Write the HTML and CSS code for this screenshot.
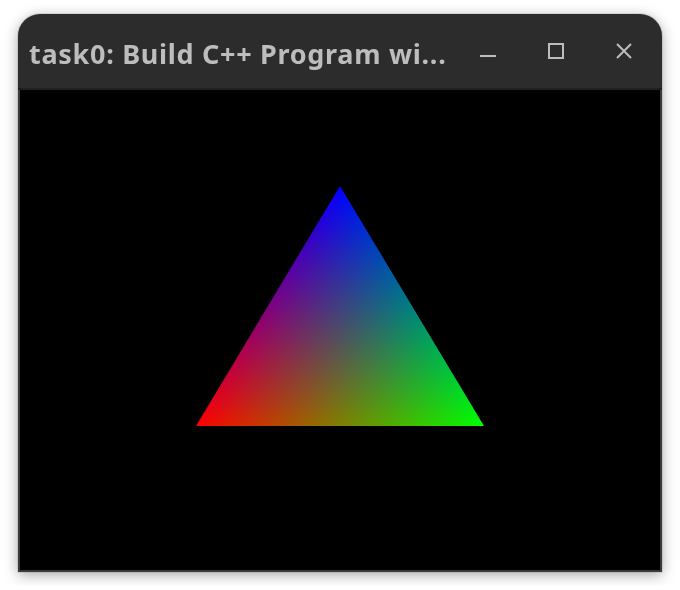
FILE: index.html
```html
<!DOCTYPE html>
<html>
<head>
<meta charset="utf-8">
<link rel="stylesheet" href="styles.css">
</head>
<body>
<div class="window">
  <div class="titlebar">
    <div class="title">task0: Build C++ Program wi...</div>
    <div class="btn">
      <svg width="16" height="16" viewBox="0 0 16 16"><rect x="0" y="12" width="16" height="2" fill="#bdbdbd"/></svg>
    </div>
    <div class="btn">
      <svg width="16" height="16" viewBox="0 0 16 16"><rect x="1" y="1" width="14" height="14" fill="none" stroke="#bdbdbd" stroke-width="2"/></svg>
    </div>
    <div class="btn btn-close">
      <svg width="16" height="16" viewBox="0 0 16 16"><path d="M1 1 L15 15 M15 1 L1 15" stroke="#bdbdbd" stroke-width="2" fill="none"/></svg>
    </div>
  </div>
  <div class="content">
    <svg class="canvas" width="640" height="480" viewBox="0 0 640 480">
      <defs>
        <linearGradient id="gb" gradientUnits="userSpaceOnUse" x1="320" y1="96" x2="320" y2="336">
          <stop offset="0" stop-color="#0000ff"/>
          <stop offset="1" stop-color="#000000"/>
        </linearGradient>
        <linearGradient id="gr" gradientUnits="userSpaceOnUse" x1="176" y1="336" x2="387.76" y2="208.94">
          <stop offset="0" stop-color="#ff0000"/>
          <stop offset="1" stop-color="#000000"/>
        </linearGradient>
        <linearGradient id="gg" gradientUnits="userSpaceOnUse" x1="464" y1="336" x2="252.24" y2="208.94">
          <stop offset="0" stop-color="#00ff00"/>
          <stop offset="1" stop-color="#000000"/>
        </linearGradient>
      </defs>
      <rect width="640" height="480" fill="#000"/>
      <polygon class="tri" points="320,96 176,336 464,336" fill="url(#gb)"/>
      <polygon class="tri" points="320,96 176,336 464,336" fill="url(#gr)"/>
      <polygon class="tri" points="320,96 176,336 464,336" fill="url(#gg)"/>
    </svg>
  </div>
</div>
</body>
</html>
```

FILE: styles.css
```css
html, body {
  margin: 0;
  padding: 0;
  background: #ffffff;
}
body {
  padding: 14px 18px;
}
.window {
  width: 644px;
  background: #2c2c2c;
  border-radius: 22px 22px 0 0;
  box-shadow: 0 3px 14px rgba(0, 0, 0, 0.35), 0 0 0 1px rgba(0,0,0,0.08);
  overflow: hidden;
}
.titlebar {
  height: 74px;
  display: flex;
  align-items: center;
  padding-left: 11px;
  padding-right: 4px;
  border-bottom: 2px solid #202020;
  box-sizing: content-box;
}
.title {
  flex: 1;
  font-family: "Noto Sans", "DejaVu Sans", sans-serif;
  font-weight: 700;
  font-size: 27px;
  letter-spacing: 0.7px;
  color: #bdbdbd;
  white-space: nowrap;
  padding-top: 4px;
}
.btn {
  width: 68px;
  height: 74px;
  display: flex;
  align-items: center;
  justify-content: center;
}
.btn svg {
  display: block;
}
.content {
  border: 2px solid #3a3a3a;
  border-top: none;
  background: #000;
  line-height: 0;
}
.canvas {
  display: block;
}
.tri {
  mix-blend-mode: screen;
}
```
